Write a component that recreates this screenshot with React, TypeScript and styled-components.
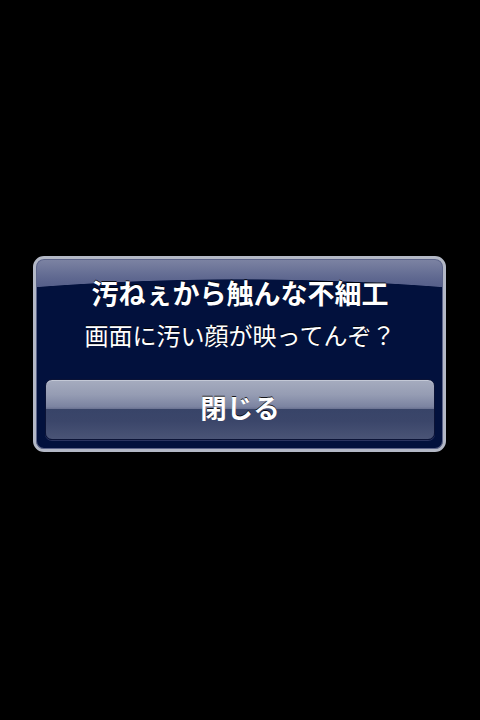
import React from "react";
import styled, { createGlobalStyle } from "styled-components";

const Global = createGlobalStyle`
  html, body {
    margin: 0;
    padding: 0;
    background: #000;
    height: 100%;
  }
  #root {
    min-height: 100%;
  }
`;

const Screen = styled.div`
  width: 480px;
  height: 720px;
  background: #000;
  padding-top: 256px;
  box-sizing: border-box;
  font-family: "Liberation Sans", "Noto Sans CJK JP", sans-serif;
`;

const AlertBox = styled.div`
  width: 413px;
  margin: 0 0 0 33px;
  box-sizing: border-box;
  border: 3px solid #b3b8c6;
  border-radius: 11px;
  box-shadow: inset 0 0 0 1px #5c648a;
  background:
    radial-gradient(700px 180px at 50% 200px, #02113d 0, #02113d calc(100% - 3px), rgba(2, 17, 61, 0) 100%),
    linear-gradient(to bottom, #7d84a3 0%, #5f6890 10%, #46507f 22%, #2f3a6c 40%, #1a2656 70%, #02113d 100%);
  padding: 19px 8px 9px 9px;
  display: flex;
  flex-direction: column;
  align-items: stretch;
`;

const Title = styled.div`
  color: #fff;
  font-family: "Noto Sans CJK JP", sans-serif;
  font-weight: 700;
  font-size: 27px;
  line-height: 30px;
  height: 30px;
  text-align: center;
  white-space: nowrap;
  text-shadow: 0 -1px 0 rgba(0, 0, 0, 0.85);
`;

const Message = styled.div`
  margin-top: 12px;
  color: #fff;
  font-family: "Noto Sans CJK JP", sans-serif;
  font-weight: 400;
  font-size: 24px;
  line-height: 30px;
  height: 30px;
  text-align: center;
  white-space: nowrap;
  text-shadow: 0 -1px 0 rgba(0, 0, 0, 0.85);
`;

const Button = styled.button`
  margin-top: 29px;
  height: 61px;
  width: 100%;
  box-sizing: border-box;
  border: 1px solid #0b1336;
  border-radius: 7px;
  box-shadow: inset 0 1px 0 #c3c8d6, 0 1px 0 #2a3460;
  background: linear-gradient(
    to bottom,
    #a6acbf 0%,
    #959cb3 25%,
    #7c84a1 45%,
    #6a7292 49%,
    #384468 50%,
    #3b466a 70%,
    #4a5476 100%
  );
  color: #fff;
  font-family: "Noto Sans CJK JP", sans-serif;
  font-weight: 700;
  font-size: 26.5px;
  line-height: 30px;
  padding: 0 0 5px 0;
  display: flex;
  align-items: center;
  justify-content: center;
  text-shadow: 0 -1px 0 rgba(0, 0, 0, 0.85);
`;

export default function App() {
  return (
    <>
      <Global />
      <Screen>
        <AlertBox>
          <Title>汚ねぇから触んな不細工</Title>
          <Message>画面に汚い顔が映ってんぞ？</Message>
          <Button>閉じる</Button>
        </AlertBox>
      </Screen>
    </>
  );
}
